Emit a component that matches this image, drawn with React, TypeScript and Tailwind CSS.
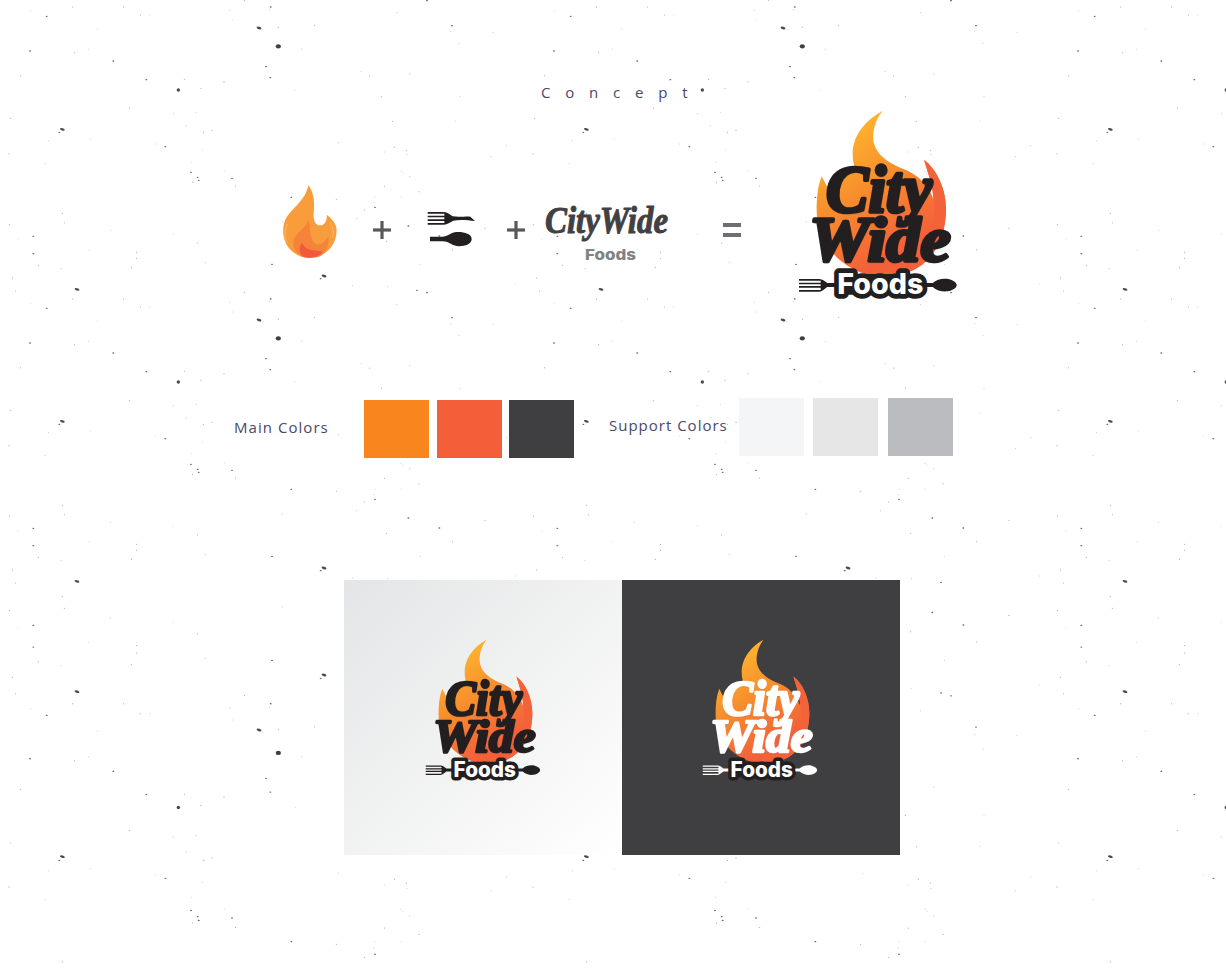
import { useId } from "react"

// speck positions are measured at 3x in one 524x292 tile: [x, y, kind]
const specks: [number, number, number][] = [
  [92,33,0],[140,49,2],[218,21,1],[371,21,1],[421,45,1],[449,45,0],[293,87,0],[90,153,2],[224,158,1],[265,148,0],
  [340,183,2],[61,227,1],[439,239,2],[553,238,1],[535,270,4],[603,265,1],[672,245,1],[388,325,1],[520,341,0],[589,337,0],
  [32,355,1],[187,388,3],[178,397,2],[145,422,0],[271,417,0],[559,377,0],[610,397,1],[636,391,1],[466,432,0],[496,440,2],
  [606,450,0],[27,461,1],[135,491,0],[575,486,0],[573,517,2],[593,532,2],[596,541,2],[578,547,1],[673,513,0],[696,535,2],
  [707,558,1],[874,592,2],[1009,598,1],[847,665,0],[187,640,1],[193,668,1],[28,673,1],[331,691,0],[100,709,2],[54,717,0],
  [520,702,0],[593,729,1],[100,761,2],[265,750,0],[410,757,1],[410,775,1],[115,796,1],[183,806,0],[394,802,1],[616,788,0],
  [38,834,1],[47,873,1],[231,868,3],[733,1,1],[812,21,2],[808,29,0],[690,31,0],[697,60,0],[777,84,3],[789,89,0],
  [835,82,1],[944,76,1],[835,139,5],[905,148,0],[798,200,2],[811,233,2],[886,270,0],[1190,38,0],[1281,2,2],[1356,77,2],
  [1352,95,0],[1479,97,0],[1377,130,0],[1083,215,0],[1109,228,1],[1229,221,0],[1144,289,1],[1380,290,0],[1177,364,1],[1367,363,0],
  [1015,428,0],[1154,456,0],[1183,442,1],[1219,451,1],[1221,464,0],[1520,437,0],[1474,470,0],[1203,514,0],[1209,519,0],[1229,530,0],
  [1153,559,1],[1257,575,1],[1125,591,0],[1203,591,0],[1122,608,0],[1125,622,2],[1093,630,1],[1070,656,0],[1225,678,2],[1455,685,1],
  [1160,724,1],[1318,708,2],[1358,749,1],[816,793,2],[972,828,3],[962,836,2],[1057,857,0],[1163,860,0],[1251,871,2],[1281,879,2],
  [1261,793,0],[1546,852,0],
]

// the tile repeats in x; lower bands are stretched vertically by 1.25
const bands = [
  { from: 0, to: 292, scale: 1, offset: 0 },
  { from: 292, to: 584, scale: 1, offset: 292 },
  { from: 584, to: 695, scale: 1.25, offset: 330 },
  { from: 695, to: 968, scale: 1.25, offset: 695 },
]

function Speck({ x, y, kind }: { x: number; y: number; kind: number }) {
  if (kind === 0) return <circle cx={x} cy={y} r={0.6} fill="#cfcfcf" />
  if (kind === 1) return <circle cx={x} cy={y} r={0.5} fill="#8a8a8a" />
  if (kind === 2) return <ellipse cx={x} cy={y} rx={1} ry={0.7} fill="#666" />
  if (kind === 3) return <ellipse cx={x} cy={y} rx={2.5} ry={1.2} fill="#4a4a4a" transform={`rotate(18 ${x} ${y})`} />
  if (kind === 4) return <circle cx={x} cy={y} r={1.7} fill="#4a4a4a" />
  return <ellipse cx={x} cy={y} rx={2.6} ry={2.2} fill="#3f3f3f" />
}

function Speckles() {
  return (
    <svg className="absolute inset-0" width={1226} height={968}>
      {bands.map((b, i) =>
        [0, 524, 1048].map((dx) =>
          specks.map(([sx, sy, kind], k) => {
            const y = (sy / 3) * b.scale + b.offset
            if (y < b.from || y >= b.to) return null
            return <Speck key={`${i}-${dx}-${k}`} x={sx / 3 + dx} y={y} kind={kind} />
          })
        )
      )}
    </svg>
  )
}

function FlameIcon() {
  return (
    <svg width={70} height={80} viewBox="834 546 210 240" className="shrink-0">
      <path
        d="M925 555C918 600 875 625 858 655C845 680 845 720 870 748C890 770 915 774 930 774C965 774 1010 745 1010 690C1010 672 995 655 980 644C982 660 975 676 960 676C945 676 940 660 941 640C943 610 945 585 925 555Z"
        fill="#f99d3c"
      />
      <path d="M925 660C920 685 885 695 880 725C877 745 890 765 915 772L950 772C975 765 988 745 985 710C975 725 955 745 940 725C928 710 932 680 925 660Z" fill="#f6833a" />
      <path d="M905 730C895 745 898 765 915 772C935 776 960 770 968 755C955 752 935 752 925 747C915 745 912 736 905 730Z" fill="#f2583a" />
      <path d="M862 672C853 690 853 712 860 728" stroke="#fbc98a" strokeWidth={2} fill="none" />
      <path d="M990 668C1000 682 1002 698 997 712" stroke="#fbc98a" strokeWidth={2} fill="none" />
    </svg>
  )
}

function ForkSpoonIcon() {
  return (
    <svg width={50} height={38} viewBox="1275 630 150 114" className="shrink-0" fill="#231f20">
      <path d="M1280 636H1325C1338 636 1345 642 1355 649C1375 652 1400 648 1408 650L1422 663C1400 660 1375 658 1357 662C1345 668 1338 674 1325 674H1280V669H1330V663H1280V658H1330V652H1280V647H1330V641H1280Z" />
      <path d="M1287 710H1325C1335 710 1342 705 1352 700C1365 692 1412 695 1412 717C1412 740 1365 743 1352 733C1342 728 1335 724 1325 724H1287Z" />
    </svg>
  )
}

function Plus() {
  return (
    <svg width={18} height={18} viewBox="0 0 18 18" className="shrink-0" fill="#58595b">
      <rect x={7.4} width={3.2} height={18} />
      <rect y={7.4} width={18} height={3.2} />
    </svg>
  )
}

function Wordmark() {
  return (
    <svg width={160} height={72} viewBox="0 0 160 72" className="shrink-0">
      <text
        x={3}
        y={39}
        textLength={123}
        lengthAdjust="spacingAndGlyphs"
        fontSize={38}
        fill="#414042"
        stroke="#414042"
        strokeWidth={1}
        strokeLinejoin="round"
        className="font-['Liberation_Serif'] font-bold italic"
      >
        CityWide
      </text>
      <text
        x={43}
        y={66}
        textLength={51}
        lengthAdjust="spacingAndGlyphs"
        fontSize={15}
        fill="#808285"
        className="font-['Inter'] font-extrabold"
      >
        Foods
      </text>
    </svg>
  )
}

// drawn in 600x630 units, the large logo is at 1/3 scale
function Logo({ width, height, light = false }: { width: number; height: number; light?: boolean }) {
  const id = useId()
  const ink = light ? "#ffffff" : "#231f20"
  return (
    <svg width={width} height={height} viewBox="0 0 600 630" preserveAspectRatio="none" className="shrink-0">
      <defs>
        <linearGradient id={id} gradientUnits="userSpaceOnUse" x1="190" y1="90" x2="400" y2="430">
          <stop offset="0" stopColor="#fdb52f" />
          <stop offset="0.5" stopColor="#f78b2c" />
          <stop offset="1" stopColor="#f3603a" />
        </linearGradient>
      </defs>
      <path
        d="M308 35C262 60 218 105 218 165C218 180 220 192 224 205C195 220 165 240 146 272L125 232C112 265 110 300 110 335C110 420 165 495 255 525C340 540 400 525 440 485C475 450 498 395 498 330C498 270 470 210 432 183C445 225 458 255 460 300C445 255 410 225 370 210C320 190 275 160 280 105C282 80 292 55 308 35Z"
        fill={`url(#${id})`}
      />
      <path d="M432 183C445 225 470 290 462 370C455 430 420 490 360 525C440 510 498 440 498 330C498 270 470 210 432 183Z" fill="#f4623a" />
      <g fill={ink} stroke={ink} strokeLinejoin="round" className="font-['Liberation_Serif'] font-bold italic drop-shadow-sm">
        <text x={138} y={338} textLength={318} lengthAdjust="spacingAndGlyphs" fontSize={200} strokeWidth={11}>
          City
        </text>
        <text x={88} y={486} textLength={424} lengthAdjust="spacingAndGlyphs" fontSize={190} strokeWidth={11}>
          Wide
        </text>
      </g>
      <g fill={ink}>
        <path d="M57 540H118C128 540 135 548 142 552H170V564H142C135 568 128 578 118 578H57V573H122V566H57V561H122V556H57V551H122V545H57Z" />
        <path d="M430 552H458C470 540 490 537 505 540C522 544 530 552 530 558C530 566 520 574 503 577C488 579 470 575 458 564H430Z" />
      </g>
      <rect x={165} y={525} width={270} height={62} rx={28} fill="#231f20" />
      <text
        x={172}
        y={584}
        textLength={258}
        lengthAdjust="spacingAndGlyphs"
        fontSize={84}
        fill="#ffffff"
        stroke="#231f20"
        strokeWidth={28}
        strokeLinejoin="round"
        paintOrder="stroke"
        className="font-['Inter'] font-extrabold"
      >
        Foods
      </text>
    </svg>
  )
}

function Swatch({ color }: { color: string }) {
  return <div className={`h-[58px] w-[65px] ${color}`} />
}

export default function App() {
  return (
    <div className="relative h-[968px] w-[1226px] overflow-hidden bg-white font-['Open_Sans',sans-serif]">
      <Speckles />
      <div className="relative flex flex-col">
        <h2 className="pl-[541px] pt-[83px] text-[15px] font-normal leading-[19px] tracking-[14.8px] text-[#4a4868]">Concept</h2>

        {/* equation row */}
        <div className="flex items-start pl-[278px]">
          <div className="mt-[80px]">
            <FlameIcon />
          </div>
          <div className="ml-[25px] mt-[119px]">
            <Plus />
          </div>
          <div className="ml-[35px] mt-[108px]">
            <ForkSpoonIcon />
          </div>
          <div className="ml-[31px] mt-[119px]">
            <Plus />
          </div>
          <div className="ml-[17px] mt-[92px]">
            <Wordmark />
          </div>
          <div className="ml-[21px] mt-[121px] flex h-[14px] w-[18px] flex-col justify-between">
            <div className="h-[4px] bg-[#6d6e71]" />
            <div className="h-[4px] bg-[#6d6e71]" />
          </div>
          <div className="ml-[39px] mt-[-3px]">
            <Logo width={200} height={210} />
          </div>
        </div>

        {/* palette */}
        <div className="mt-[91px] flex items-start pl-[234px]">
          <div className="flex">
            <div className="mt-[17px] w-[130px] text-[15px] leading-[20px] tracking-[1.05px] text-[#4a4868]">Main Colors</div>
            <div className="flex">
              <Swatch color="bg-[#f9851f]" />
              <div className="ml-[8px]">
                <Swatch color="bg-[#f45f3a]" />
              </div>
              <div className="ml-[7px]">
                <Swatch color="bg-[#3f3f41]" />
              </div>
            </div>
          </div>
          <div className="ml-[35px] mt-[-2px] flex">
            <div className="mt-[17px] w-[130px] text-[15px] leading-[20px] tracking-[1px] text-[#4a4868]">Support Colors</div>
            <div className="flex">
              <Swatch color="bg-[#f4f5f6]" />
              <div className="ml-[9px]">
                <Swatch color="bg-[#e6e6e7]" />
              </div>
              <div className="ml-[10px]">
                <Swatch color="bg-[#bbbcbf]" />
              </div>
            </div>
          </div>
        </div>

        {/* logo on light and dark */}
        <div className="mt-[122px] flex pl-[344px]">
          <div className="h-[275px] w-[278px] bg-gradient-to-br from-[#e4e5e6] to-[#ffffff] pl-[68px] pt-[51px]">
            <Logo width={145} height={157} />
          </div>
          <div className="h-[275px] w-[278px] bg-[#3f3f41] pl-[67px] pt-[51px]">
            <Logo width={145} height={157} light />
          </div>
        </div>
      </div>
    </div>
  )
}
